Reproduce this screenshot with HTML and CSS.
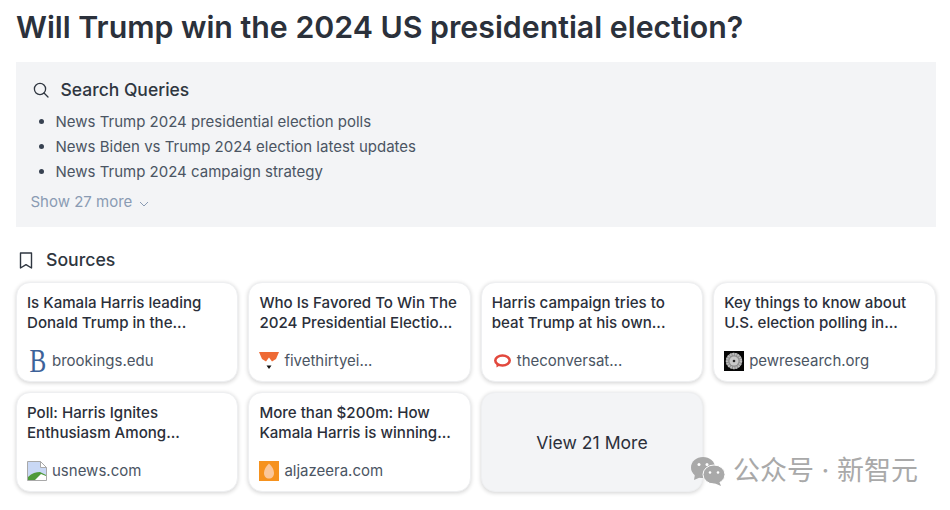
FILE: index.html
```html
<!DOCTYPE html>
<html lang="en">
<head>
<meta charset="utf-8">
<title>Will Trump win the 2024 US presidential election?</title>
<link rel="stylesheet" href="styles.css">
</head>
<body>
<main class="page">
  <h1 class="title">Will Trump win the 2024 US presidential election?</h1>
  <section class="queries">
    <h2 class="queries-head">
      <svg class="icon-search" viewBox="0 0 16 16" width="16" height="16" fill="none" stroke="#2f3640" stroke-width="1.3" stroke-linecap="round"><circle cx="7" cy="7" r="5.6"/><path d="M11 11l4 4"/></svg>
      Search Queries
    </h2>
    <ul class="query-list">
      <li>News Trump 2024 presidential election polls</li>
      <li>News Biden vs Trump 2024 election latest updates</li>
      <li>News Trump 2024 campaign strategy</li>
    </ul>
    <div class="show-more">Show 27 more
      <svg viewBox="0 0 10 6" width="10" height="6" fill="none" stroke="#8a9bb3" stroke-width="1"><path d="M1 1l4 4 4-4"/></svg>
    </div>
  </section>
  <h2 class="sources-head">
    <svg viewBox="0 0 14 17" width="14" height="17" fill="none" stroke="#2f3640" stroke-width="1.4" stroke-linejoin="round"><path d="M1.5 1h11v15L7 12.600 1.500 16z"/></svg>
    Sources
  </h2>
  <section class="cards">
    <article class="card">
      <p class="card-title">Is Kamala Harris leading Donald Trump in the...</p>
      <div class="site">
        <span class="fav fav-b">B</span>
        <span>brookings.edu</span>
      </div>
    </article>
    <article class="card">
      <p class="card-title">Who Is Favored To Win The 2024 Presidential Electio...</p>
      <div class="site">
        <svg class="fav" viewBox="0 0 20 20"><path d="M0 1h20l-3 7-4 2.500-3-4-3 4L3 8z" fill="#ee6a35"/><path d="M7.500 14.500h5L10 18z" fill="#111"/></svg>
        <span>fivethirtyei...</span>
      </div>
    </article>
    <article class="card">
      <p class="card-title">Harris campaign tries to beat Trump at his own...</p>
      <div class="site">
        <svg class="fav" viewBox="0 0 20 20"><ellipse cx="10.500" cy="9.500" rx="7.200" ry="5" fill="none" stroke="#e2483d" stroke-width="2.600"/><path d="M4.500 13v3.500l4-2.500z" fill="#e2483d"/></svg>
        <span>theconversat...</span>
      </div>
    </article>
    <article class="card">
      <p class="card-title">Key things to know about U.S. election polling in...</p>
      <div class="site">
        <svg class="fav" viewBox="0 0 20 20"><rect width="20" height="20" fill="#050505"/><circle cx="10" cy="10" r="8.200" fill="#8f8f8f"/><circle cx="10" cy="10" r="7" fill="none" stroke="#bdbdbd" stroke-width="2.400" stroke-dasharray="1.600 1"/><circle cx="10" cy="10" r="4.500" fill="#c8c8c8"/><circle cx="10" cy="10" r="1.300" fill="#222"/></svg>
        <span>pewresearch.org</span>
      </div>
    </article>
    <article class="card">
      <p class="card-title">Poll: Harris Ignites Enthusiasm Among...</p>
      <div class="site">
        <svg class="fav" viewBox="0 0 20 20"><path d="M.5.500h13l6 6v13H.5z" fill="#c9d8f5" stroke="#a9a9a9"/><path d="M13.500.500v6h6z" fill="#fff" stroke="#a9a9a9"/><path d="M1 19v-3c4-4 8-5 12-5l6 3v1l-5 4z" fill="#4f9a3a"/><path d="M8 19l6-6 5 2v4z" fill="#fff"/></svg>
        <span>usnews.com</span>
      </div>
    </article>
    <article class="card">
      <p class="card-title">More than $200m: How Kamala Harris is winning...</p>
      <div class="site">
        <svg class="fav" viewBox="0 0 20 20"><rect width="20" height="20" fill="#f6921e"/><path d="M10 2.500c3 3 5 6 5 9.500s-2 5.500-5 5.500-5-2-5-5.500 2-6.500 5-9.500z" fill="#fbc79a"/></svg>
        <span>aljazeera.com</span>
      </div>
    </article>
    <article class="card card-more">View 21 More</article>
  </section>
  <aside class="mark">
    <svg viewBox="0 0 36 30" width="36" height="30"><ellipse cx="13" cy="11.500" rx="12" ry="10.500" fill="#a9a9a9"/><path d="M5 18l-1 6 7-3z" fill="#a9a9a9"/><ellipse cx="24" cy="18.500" rx="11" ry="9.500" fill="#a9a9a9" stroke="#fff" stroke-width="1"/><path d="M29 25l2 5-7-3z" fill="#a9a9a9"/><circle cx="9" cy="8.500" r="1.500" fill="#fff"/><circle cx="17" cy="8.500" r="1.500" fill="#fff"/><circle cx="20" cy="16.500" r="1.300" fill="#fff"/><circle cx="28" cy="16.500" r="1.300" fill="#fff"/></svg>
    <span class="mark-text">公众号 · 新智元</span>
  </aside>
</main>
</body>
</html>
```

FILE: styles.css
```css
* { box-sizing: border-box; }
html, body { margin: 0; padding: 0; background: #fff; }
body { font-family: Inter, "Noto Sans CJK SC", sans-serif; color: #2f3640; width: 950px; height: 510px; overflow: hidden; }
.page { position: relative; width: 950px; height: 510px; padding: 8px 14px 0 16px; }
.title { margin: 0 0 15px; font-size: 30.3px; line-height: 39px; font-weight: 600; color: #2b313b; }
.queries { height: 165px; background: #f3f4f6; padding: 16px 14px 0 14.5px; }
.queries-head { display: flex; align-items: center; gap: 11.5px; margin: 0 0 7px; padding-left: 2.5px; font-size: 17.5px; line-height: 24px; font-weight: 500; color: #2f3640; }
.query-list { margin: 0; padding: 0 0 0 25px; font-size: 15px; line-height: 25px; color: #4b5563; }
.query-list li::marker { color: #374151; }
.show-more { display: flex; align-items: center; gap: 7px; margin-top: 8px; font-size: 15px; line-height: 20px; color: #8a9bb3; }
.show-more svg { margin-top: 3px; }
.sources-head { display: flex; align-items: center; gap: 13px; margin: 21px 0 10px; padding-left: 3px; font-size: 17.7px; line-height: 24px; font-weight: 500; color: #2f3640; }
.cards { display: grid; grid-template-columns: repeat(4, 1fr); grid-auto-rows: 100px; gap: 10px; width: 919.5px; }
.card { display: flex; flex-direction: column; justify-content: space-between; border: 1px solid #eeeff1; border-radius: 14px; background: #fff; box-shadow: 0 1px 4px rgba(0,0,0,.18); padding: 10px; }
.card-title { margin: 0; font-size: 15.1px; line-height: 20px; font-weight: 500; color: #2b2f3a; }
.site { display: flex; align-items: center; gap: 5px; font-size: 15px; line-height: 20px; color: #4b5563; }
.fav { flex: none; width: 20px; height: 20px; }
.fav-b { font-family: "Liberation Serif", serif; font-size: 33px; line-height: 20px; color: #3d6299; text-align: center; transform: scaleX(.76); }
.card-more { align-items: center; justify-content: center; background: #f3f4f6; font-size: 17.6px; color: #2b2f3a; }
.mark { position: absolute; left: 690px; top: 456px; display: flex; align-items: center; gap: 7px; line-height: 30px; color: #a9a9a9; white-space: nowrap; }
.mark-text { font-size: 27px; }
```
